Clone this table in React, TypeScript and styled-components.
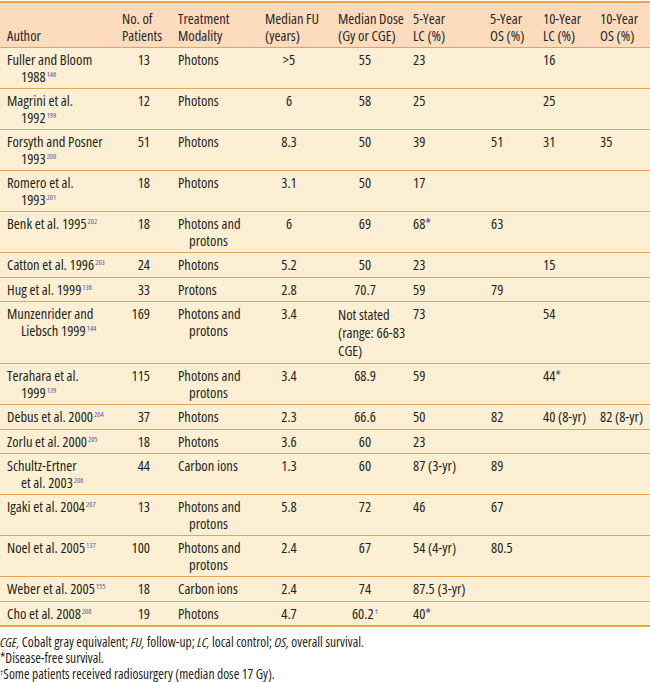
import { FC, Fragment, ReactNode } from "react";
import styled, { createGlobalStyle } from "styled-components";

const GlobalStyle = createGlobalStyle`
    html, body {
        margin: 0;
        padding: 0;
        background: #ffffff;
    }
    body {
        font-family: "Open Sans", "Liberation Sans", sans-serif;
        font-stretch: 82%;
        color: #231f20;
    }
`;

const ORANGE = "#eda448";

type Align = "left" | "right" | "center";

type ColumnSpec = {
    width: number;
    align: Align;
    pl: number;
    pr: number;
    indent: number;
};

const Columns: ColumnSpec[] = [
    { width: 116, align: "left", pl: 21, pr: 2, indent: 14 },
    { width: 56, align: "right", pl: 6, pr: 22, indent: 0 },
    { width: 87, align: "left", pl: 17, pr: 2, indent: 11 },
    { width: 73, align: "center", pl: 6, pr: 19, indent: 0 },
    { width: 75, align: "center", pl: 6, pr: 15, indent: 0 },
    { width: 77, align: "left", pl: 6, pr: 2, indent: 0 },
    { width: 53, align: "left", pl: 7, pr: 2, indent: 0 },
    { width: 57, align: "left", pl: 6, pr: 2, indent: 0 },
    { width: 56, align: "left", pl: 6, pr: 2, indent: 0 },
];

const Page = styled.div`
    width: 650px;
    padding-top: 1px;
`;

const Table = styled.table`
    width: 650px;
    border-collapse: collapse;
    table-layout: fixed;
    border-top: 2px solid ${ORANGE};
    border-bottom: 2px solid ${ORANGE};
    font-size: 14.5px;
    line-height: 16.5px;
`;

const HeadRow = styled.tr`
    background: #fcdcbc;
`;

const BodyRow = styled.tr`
    background: #fdefd3;
    border-top: 1px solid ${ORANGE};
`;

const HeadCell = styled.th<{ $pl: number }>`
    font-weight: normal;
    text-align: left;
    vertical-align: bottom;
    padding: 7px 2px 3px ${({ $pl }) => $pl}px;
    line-height: 17px;
    color: #2b2627;
    white-space: nowrap;
`;

const Cell = styled.td<{ $align: Align; $pl: number; $pr: number; $indent: number; $loose?: boolean }>`
    vertical-align: top;
    text-align: ${({ $align }) => $align};
    padding: 4px ${({ $pr }) => $pr}px 3px ${({ $pl }) => $pl}px;
    text-indent: ${({ $indent }) => -$indent}px;
    line-height: ${({ $loose }) => ($loose ? "18px" : "16.5px")};
    white-space: nowrap;
`;

const Ref = styled.sup`
    font-size: 7.5px;
    line-height: 0;
    vertical-align: 5px;
    color: #5b4f9e;
    margin-left: 1px;
`;

const Mark = styled.span`
    color: #4a3f86;
`;

const Notes = styled.div`
    margin-top: 7px;
    font-size: 13.5px;
    line-height: 16px;
`;

const Note = styled.div`
    white-space: nowrap;
`;

const NoteMark = styled.sup`
    font-size: 7.5px;
    line-height: 0;
    vertical-align: 4px;
`;

type Row = {
    author: string[];
    ref: string;
    cells: (string | string[])[];
};

const Rows: Row[] = [
    { author: ["Fuller and Bloom", "1988"], ref: "146", cells: ["13", "Photons", ">5", "55", "23", "", "16", ""] },
    { author: ["Magrini et al.", "1992"], ref: "199", cells: ["12", "Photons", "6", "58", "25", "", "25", ""] },
    { author: ["Forsyth and Posner", "1993"], ref: "200", cells: ["51", "Photons", "8.3", "50", "39", "51", "31", "35"] },
    { author: ["Romero et al.", "1993"], ref: "201", cells: ["18", "Photons", "3.1", "50", "17", "", "", ""] },
    { author: ["Benk et al. 1995"], ref: "202", cells: ["18", ["Photons and", "protons"], "6", "69", "68*", "63", "", ""] },
    { author: ["Catton et al. 1996"], ref: "203", cells: ["24", "Photons", "5.2", "50", "23", "", "15", ""] },
    { author: ["Hug et al. 1999"], ref: "136", cells: ["33", "Protons", "2.8", "70.7", "59", "79", "", ""] },
    {
        author: ["Munzenrider and", "Liebsch 1999"],
        ref: "144",
        cells: ["169", ["Photons and", "protons"], "3.4", ["Not stated", "(range: 66-83", "CGE)"], "73", "", "54", ""],
    },
    { author: ["Terahara et al.", "1999"], ref: "139", cells: ["115", ["Photons and", "protons"], "3.4", "68.9", "59", "", "44*", ""] },
    { author: ["Debus et al. 2000"], ref: "204", cells: ["37", "Photons", "2.3", "66.6", "50", "82", "40 (8-yr)", "82 (8-yr)"] },
    { author: ["Zorlu et al. 2000"], ref: "205", cells: ["18", "Photons", "3.6", "60", "23", "", "", ""] },
    { author: ["Schultz-Ertner", "et al. 2003"], ref: "206", cells: ["44", "Carbon ions", "1.3", "60", "87 (3-yr)", "89", "", ""] },
    { author: ["Igaki et al. 2004"], ref: "207", cells: ["13", ["Photons and", "protons"], "5.8", "72", "46", "67", "", ""] },
    { author: ["Noel et al. 2005"], ref: "137", cells: ["100", ["Photons and", "protons"], "2.4", "67", "54 (4-yr)", "80.5", "", ""] },
    { author: ["Weber et al. 2005"], ref: "155", cells: ["18", "Carbon ions", "2.4", "74", "87.5 (3-yr)", "", "", ""] },
    { author: ["Cho et al. 2008"], ref: "208", cells: ["19", "Photons", "4.7", "60.2†", "40*", "", "", ""] },
];

const Headers: string[][] = [
    ["Author"],
    ["No. of", "Patients"],
    ["Treatment", "Modality"],
    ["Median FU", "(years)"],
    ["Median Dose", "(Gy or CGE)"],
    ["5-Year", "LC (%)"],
    ["5-Year", "OS (%)"],
    ["10-Year", "LC (%)"],
    ["10-Year", "OS (%)"],
];

// trailing * or † gets the footnote colour
const withMark = (text: string): ReactNode => {
    const last = text.slice(-1);
    if (last === "*") return <>{text.slice(0, -1)}<Mark>*</Mark></>;
    if (last === "†") return <>{text.slice(0, -1)}<Ref>†</Ref></>;
    return text;
};

const Lines: FC<{ lines: string[]; tail?: ReactNode }> = ({ lines, tail }) => (
    <>
        {lines.map((line, i) => (
            <Fragment key={i}>
                {i > 0 && <br />}
                {withMark(line)}
                {i === lines.length - 1 && tail}
            </Fragment>
        ))}
    </>
);

const headPad = (i: number) => {
    if (i === 0) return 7;
    const col = Columns[i];
    return col.indent ? col.pl - col.indent : 6;
};

const App: FC = () => {
    return (
        <Page>
            <GlobalStyle />
            <Table>
                <colgroup>
                    {Columns.map((col, i) => (
                        <col key={i} style={{ width: col.width }} />
                    ))}
                </colgroup>
                <thead>
                    <HeadRow>
                        {Headers.map((lines, i) => (
                            <HeadCell key={i} $pl={headPad(i)}>
                                <Lines lines={lines} />
                            </HeadCell>
                        ))}
                    </HeadRow>
                </thead>
                <tbody>
                    {Rows.map((row, r) => {
                        const values = [row.author, ...row.cells];
                        return (
                            <BodyRow key={r}>
                                {values.map((value, c) => {
                                    const col = Columns[c];
                                    const lines = Array.isArray(value) ? value : [value];
                                    const free = lines.length > 2;
                                    return (
                                        <Cell
                                            key={c}
                                            $align={free ? "left" : col.align}
                                            $pl={col.pl}
                                            $pr={free ? 2 : col.pr}
                                            $indent={col.indent}
                                            $loose={free}
                                        >
                                            <Lines
                                                lines={lines}
                                                tail={c === 0 ? <Ref>{row.ref}</Ref> : undefined}
                                            />
                                        </Cell>
                                    );
                                })}
                            </BodyRow>
                        );
                    })}
                </tbody>
            </Table>
            <Notes>
                <Note>
                    <i>CGE,</i> Cobalt gray equivalent; <i>FU,</i> follow-up; <i>LC,</i> local control;{" "}
                    <i>OS,</i> overall survival.
                </Note>
                <Note>*Disease-free survival.</Note>
                <Note>
                    <NoteMark>†</NoteMark>Some patients received radiosurgery (median dose 17 Gy).
                </Note>
            </Notes>
        </Page>
    );
};

export default App;
